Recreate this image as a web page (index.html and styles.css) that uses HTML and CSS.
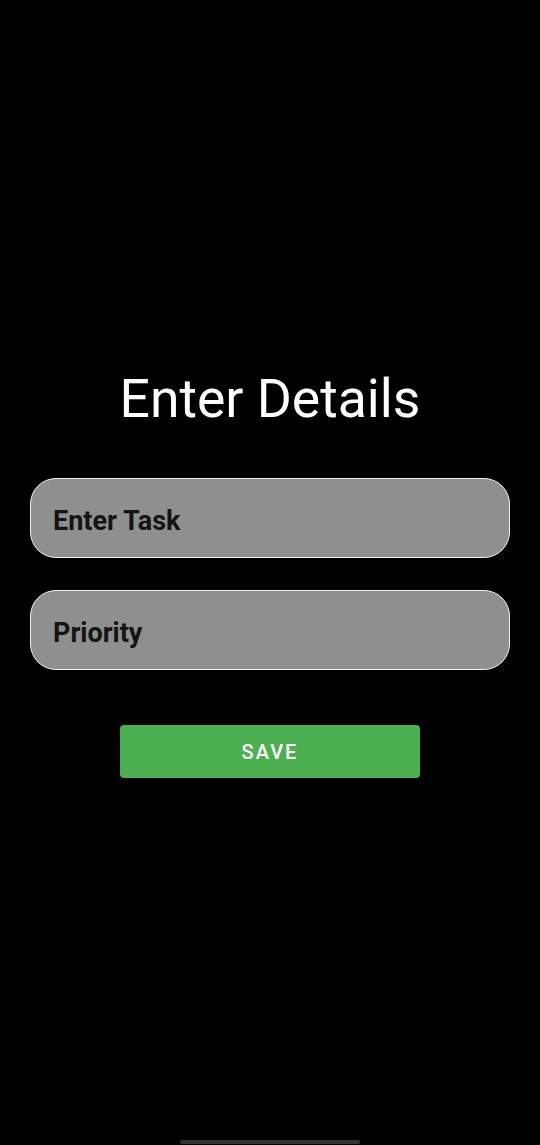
FILE: index.html
```html
<!DOCTYPE html>
<html>
<head>
<meta charset="utf-8">
<link rel="stylesheet" href="styles.css">
</head>
<body>
<main class="screen">
  <h1 class="title">Enter Details</h1>
  <div class="field"><span class="placeholder">Enter Task</span></div>
  <div class="field"><span class="placeholder">Priority</span></div>
  <button class="save">SAVE</button>
  <div class="spacer"></div>
  <div class="home-bar"></div>
</main>
</body>
</html>
```
FILE: styles.css
```css
html, body {
  margin: 0;
  padding: 0;
  background: #000;
}
.screen {
  width: 540px;
  height: 1145px;
  display: flex;
  flex-direction: column;
  align-items: center;
  font-family: Roboto, "Liberation Sans", sans-serif;
  box-sizing: border-box;
  padding-top: 366px;
}
.title {
  margin: 0;
  color: #fff;
  font-weight: 400;
  font-size: 53.5px;
  line-height: 66px;
  margin-bottom: 46px;
}
.field {
  width: 480px;
  height: 80px;
  box-sizing: border-box;
  border: 1.5px solid #f2f2f2;
  border-radius: 26px;
  background: #8f8f8f;
  display: flex;
  align-items: center;
  padding-left: 22px;
  padding-top: 5px;
  margin-bottom: 32px;
}
.placeholder {
  color: #141414;
  font-weight: 700;
  font-size: 27px;
}
.save {
  margin-top: 23px;
  width: 300px;
  height: 53px;
  border: none;
  border-radius: 4px;
  background: #4caf50;
  color: #fff;
  font-family: Roboto, "Liberation Sans", sans-serif;
  font-weight: 500;
  font-size: 20px;
  letter-spacing: 2px;
}
.spacer { flex: 1; }
.home-bar {
  width: 180px;
  height: 4px;
  background: #333;
  border-radius: 2px;
  margin-bottom: 1px;
}
```
